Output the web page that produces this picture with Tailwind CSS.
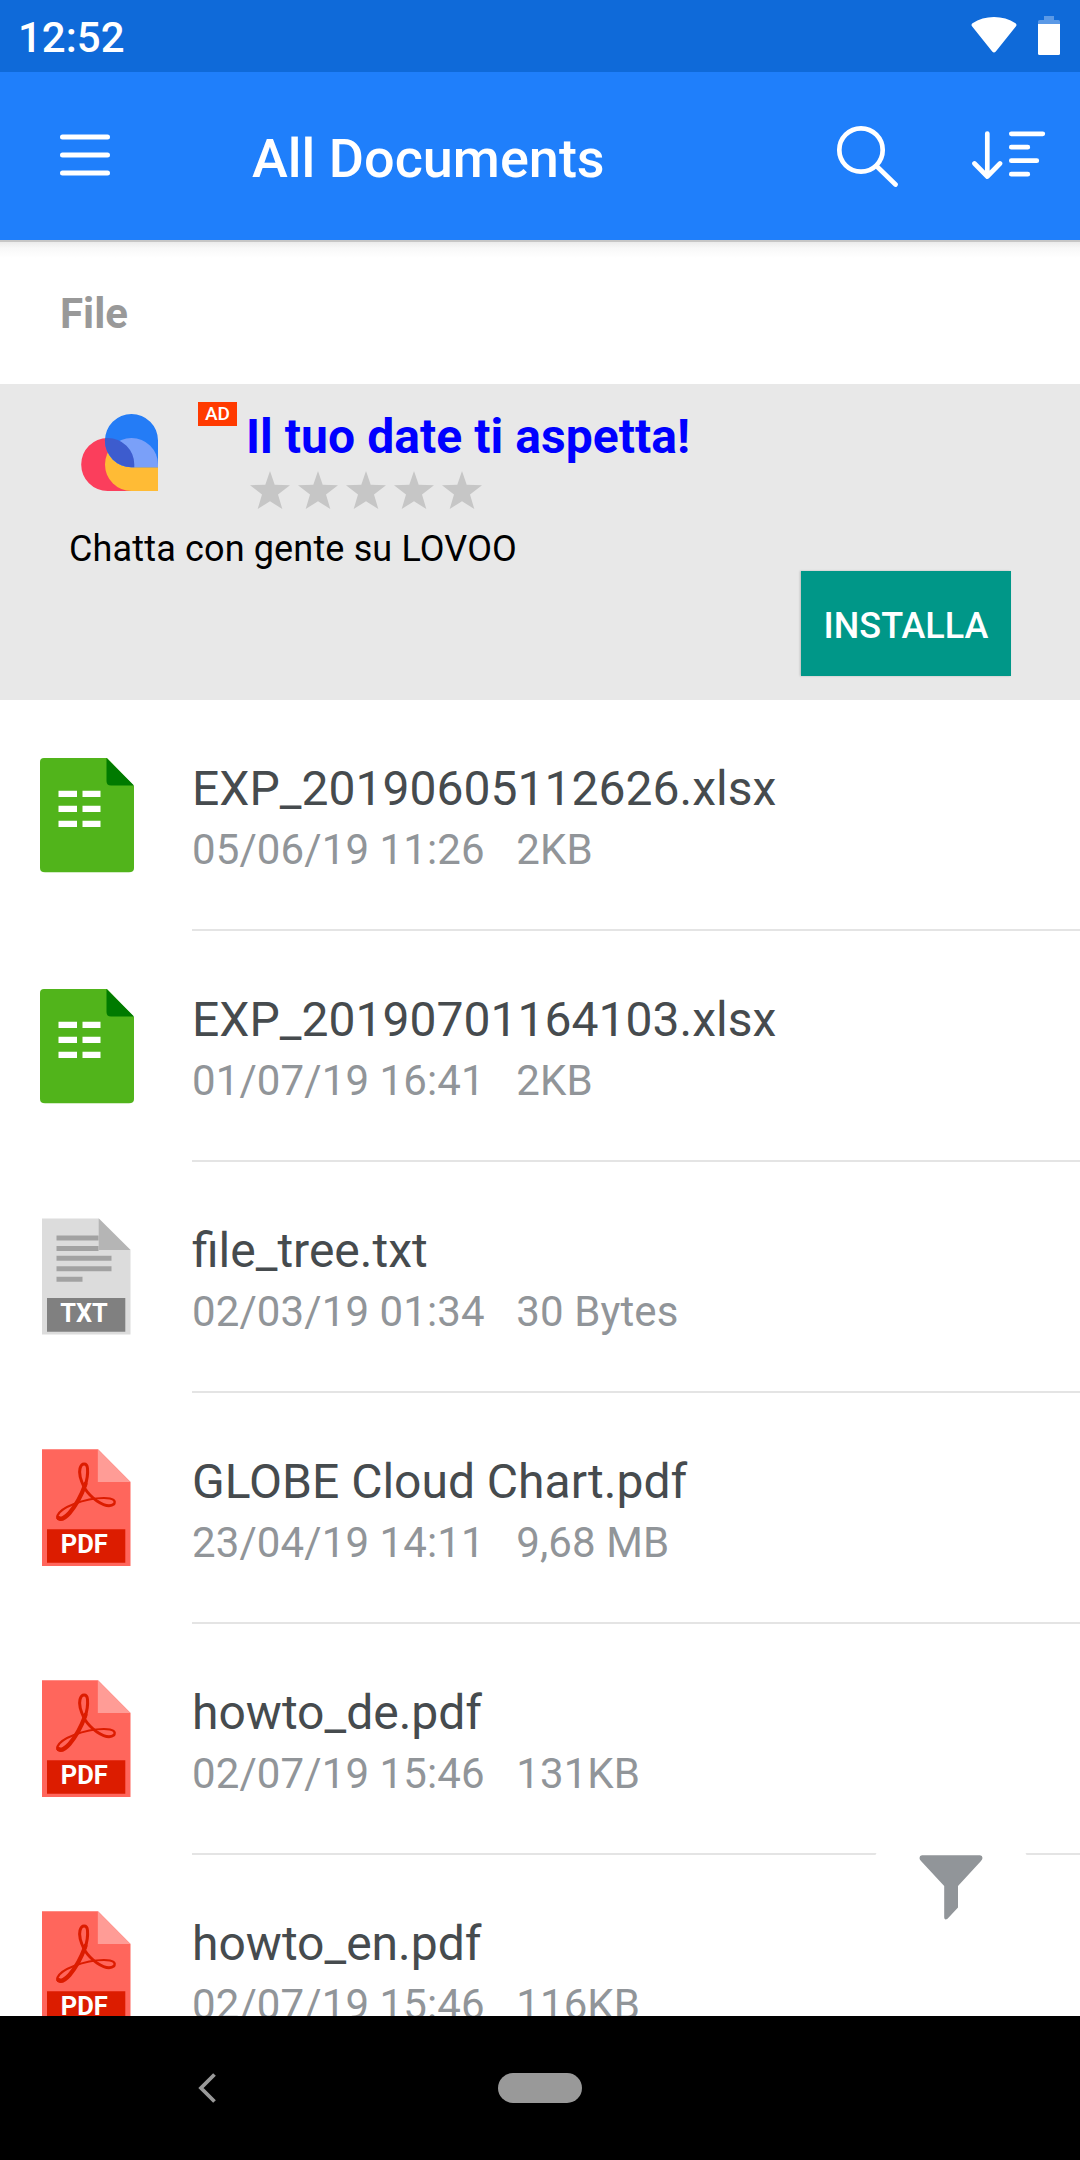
<!DOCTYPE html>
<html lang="it">
<head>
<meta charset="utf-8">
<title>All Documents</title>
<script src="https://cdn.jsdelivr.net/npm/@tailwindcss/browser@4"></script>
</head>
<body class="bg-white">
<svg class="hidden">
  <symbol id="xls" viewBox="0 0 96 120">
    <path d="M5 1H68L95 29V111Q95 115.300 90 115.300H6Q1 115.300 1 111V5Q1 1 5 1Z" fill="#51b41b"/>
    <path d="M67.500 1L95 28.500H72Q67.500 28.500 67.500 24Z" fill="#007a00"/>
    <path d="M19.500 33.700h18.500v6.300h-18.500zM43.500 33.700h18v6.300h-18zM19.500 48.700h18.500v6.300h-18.500zM43.500 48.700h18v6.300h-18zM19.500 63.800h18.500v6.300h-18.500zM43.500 63.800h18v6.300h-18z" fill="#fff"/>
  </symbol>
  <symbol id="txt" viewBox="0 0 96 120">
    <path d="M3 1.500H60L91.500 33V117.500H3Z" fill="#dcdcdc"/>
    <path d="M59.700 1.500L91.500 33H59.700Z" fill="#b5b5b5"/>
    <path d="M17.500 18.500h42v5h-42zM17.500 29h42v5h-42zM17.500 38.800h55v5h-55zM17.500 49.200h55v5h-55zM17.500 59.800h26v5h-26z" fill="#a2a2a2"/>
    <path d="M8 81h78.300v33.700h-78.300z" fill="#808080"/>
    <text x="45" y="104.700" text-anchor="middle" textLength="47.500" lengthAdjust="spacingAndGlyphs" font-size="26" font-weight="700" fill="#fff">TXT</text>
  </symbol>
  <symbol id="pdf" viewBox="0 0 96 120">
    <path d="M3 1.300H59L91.500 34V118H3Z" fill="#ff665c"/>
    <path d="M58.800 1.300L91.500 34H58.800Z" fill="#ff9c96"/>
    <g fill="none" stroke="#dc1c00" stroke-linecap="round" stroke-linejoin="round">
      <path d="M45.500 40C41.500 32 39.500 26 41 20.500C42.500 14.500 48 14.500 48.500 20.500C49 26 48 32 46 38" stroke-width="3"/>
      <path d="M26 68.500C21.500 72.500 17 71.500 18.500 67.500C20.500 63 27 59 35 56C44 52.500 55 50 65 50C75 50 77 53 75 56" stroke-width="2.200"/>
      <path d="M45.500 40C49 45.500 53 49.500 58 53C64 57 71 59.500 75 56" stroke-width="2.900"/>
      <path d="M46.500 36C42.500 47 37 57.500 30.500 65C26.500 69.500 22 72 19.500 70" stroke-width="4.200"/>
    </g>
    <path d="M8 81.300h78.300v33.500h-78.300z" fill="#dc1c00"/>
    <text x="45.300" y="105" text-anchor="middle" textLength="47" lengthAdjust="spacingAndGlyphs" font-size="26" font-weight="700" fill="#fff">PDF</text>
  </symbol>
  <symbol id="star" viewBox="0 0 40 38">
    <path d="M20 0L24.700 13.800L40 14.200L28 23.500L32.300 38L20 30.300L7.700 38L12 23.500L0 14.200L15.300 13.800Z" fill="#c6c6c6"/>
  </symbol>
</svg>

<div class="relative flex h-[2160px] w-[1080px] flex-col overflow-hidden bg-white font-['Roboto',sans-serif]">
  <!-- status bar -->
  <div class="flex h-[72px] shrink-0 items-center justify-between bg-[#0f6ad9] pr-5 pl-[18px] text-white">
    <span class="pt-[2px] text-[42px] leading-[49px] font-medium">12:52</span>
    <div class="flex items-center gap-[21px]">
      <svg class="mb-[2px] h-[36px] w-[46px]" viewBox="0 0 46 36"><path d="M1.200 9.600Q-.3 7.800 1.500 6.300Q11 0 23 0Q35 0 44.500 6.300Q46.300 7.800 44.800 9.600L24.800 34.500Q23 36.700 21.200 34.500Z" fill="#fff"/></svg>
      <svg class="mb-[1px] h-[39px] w-[22px]" viewBox="0 0 22 39"><path d="M6 0h10v4h4.500q1.500 0 1.500 1.500v3h-22v-3q0-1.500 1.500-1.500h4.500z" fill="#5b99e6"/><path d="M0 8h22v29.500q0 1.500-1.500 1.500h-19q-1.500 0-1.500-1.500z" fill="#fff"/></svg>
    </div>
  </div>
  <!-- app bar -->
  <header class="flex h-[168px] shrink-0 items-center bg-[#1f7ffb] pr-[34px] pl-[60px] text-white">
    <svg class="mb-[2px] h-[42px] w-[50px]" viewBox="0 0 50 42" stroke="#fff" stroke-width="5" stroke-linecap="round"><path d="M2.500 3h45M2.500 21h45M2.500 39h45"/></svg>
    <h1 class="ml-[142px] grow pt-[5px] text-[54px] leading-[64px] font-medium whitespace-nowrap">All Documents</h1>
    <svg class="h-[64px] w-[64px]" viewBox="0 0 64 64" fill="none" stroke="#fff" stroke-width="4.700" stroke-linecap="round"><circle cx="27" cy="26" r="21.700"/><path d="M43.500 43L61.500 60.500"/></svg>
    <svg class="mb-[2px] ml-[72px] h-[50px] w-[76px]" viewBox="0 0 76 50" fill="none" stroke="#fff" stroke-width="4.700" stroke-linecap="round" stroke-linejoin="round"><path d="M17.300 3.500V46M4.500 33.500L17.300 46.500L30 33.500M41.300 3.800h31.500M41.300 17.200h16.500M41.300 30.700h25.500M41.300 44.200h16.500"/></svg>
  </header>
  <div class="h-[2px] shrink-0 bg-[#c6c6c6]"></div>
  <div class="h-[142px] shrink-0 bg-[linear-gradient(#ebebeb,#f8f8f8_6px,#fff_16px)] pt-[47px] pl-[60px] text-[42px] leading-[49px] font-bold text-[#999]">File</div>
  <!-- sponsored item -->
  <section class="flex h-[316px] shrink-0 flex-col bg-[#e8e8e8]">
    <div class="flex h-[136px] items-start pl-[81px]">
      <svg class="mt-[30px] h-[77px] w-[77px]" viewBox="0 0 77 77">
        <defs><clipPath id="top"><path d="M50.500 0A26.500 26.500 0 0 1 77 26.500V53.200H50.500A26.500 26.500 0 0 1 50.500 0Z"/></clipPath></defs>
        <path d="M26.700 24A26.500 26.500 0 0 1 53.300 50.500V77H26.700A26.500 26.500 0 0 1 26.700 24Z" fill="#fb3e5c"/>
        <path d="M50.500 24A26.500 26.500 0 0 1 77 50.500V77H50.500A26.500 26.500 0 0 1 50.500 24Z" fill="#ffbb35"/>
        <g clip-path="url(#top)">
          <path d="M0 0h77v77h-77z" fill="#247cf6"/>
          <path d="M50.500 24A26.500 26.500 0 0 1 77 50.500V77H50.500A26.500 26.500 0 0 1 50.500 24Z" fill="#7aa0f9"/>
          <path d="M26.700 24A26.500 26.500 0 0 1 53.300 50.500V77H26.700A26.500 26.500 0 0 1 26.700 24Z" fill="#3d5cce"/>
        </g>
      </svg>
      <span class="mt-[18px] ml-[40px] flex h-[24px] w-[39px] items-center justify-center bg-[#ff3a00] text-[19px] leading-[24px] font-medium text-white">AD</span>
      <div class="ml-[9px] pt-[25px]">
        <div class="text-[48px] leading-[56px] font-bold tracking-[0.05px] whitespace-nowrap text-[#0000ff]">Il tuo date ti aspetta!</div>
        <div class="mt-[6px] ml-[4px] flex gap-[8px]">
          <svg class="h-[38px] w-[40px]"><use href="#star"/></svg>
          <svg class="h-[38px] w-[40px]"><use href="#star"/></svg>
          <svg class="h-[38px] w-[40px]"><use href="#star"/></svg>
          <svg class="h-[38px] w-[40px]"><use href="#star"/></svg>
          <svg class="h-[38px] w-[40px]"><use href="#star"/></svg>
        </div>
      </div>
    </div>
    <p class="mt-[8px] ml-[69px] text-[36px] leading-[42px] tracking-[0.15px] text-black">Chatta con gente su LOVOO</p>
    <div class="mt-[1px] mr-[69px] flex h-[105px] w-[210px] items-center justify-center self-end bg-[#009788] pt-[5px] text-[36px] leading-[42px] font-medium text-white shadow-[-1px_0_2px_rgba(0,0,0,0.2)]">INSTALLA</div>
  </section>
  <!-- file list -->
  <main class="h-[1316px] shrink-0 overflow-hidden">
    <article class="flex h-[231px]">
      <svg class="mt-[57px] ml-[39px] h-[120px] w-[96px]"><use href="#xls"/></svg>
      <div class="ml-[57px] grow border-b-2 border-[#e4e4e4] pt-[61px]">
        <div class="text-[48px] leading-[56px] tracking-[0.03px] text-[#464b4e]">EXP_20190605112626.xlsx</div>
        <div class="mt-[8px] text-[42px] leading-[49px] tracking-[0.1px] whitespace-pre text-[#919599]">05/06/19 11:26   2KB</div>
      </div>
    </article>
    <article class="flex h-[231px]">
      <svg class="mt-[57px] ml-[39px] h-[120px] w-[96px]"><use href="#xls"/></svg>
      <div class="ml-[57px] grow border-b-2 border-[#e4e4e4] pt-[61px]">
        <div class="text-[48px] leading-[56px] tracking-[0.03px] text-[#464b4e]">EXP_20190701164103.xlsx</div>
        <div class="mt-[8px] text-[42px] leading-[49px] tracking-[0.1px] whitespace-pre text-[#919599]">01/07/19 16:41   2KB</div>
      </div>
    </article>
    <article class="flex h-[231px]">
      <svg class="mt-[55px] ml-[39px] h-[120px] w-[96px]"><use href="#txt"/></svg>
      <div class="ml-[57px] grow border-b-2 border-[#e4e4e4] pt-[61px]">
        <div class="text-[48px] leading-[56px] text-[#464b4e]">file_tree.txt</div>
        <div class="mt-[8px] text-[42px] leading-[49px] tracking-[0.1px] whitespace-pre text-[#919599]">02/03/19 01:34   30 Bytes</div>
      </div>
    </article>
    <article class="flex h-[231px]">
      <svg class="mt-[55px] ml-[39px] h-[120px] w-[96px]"><use href="#pdf"/></svg>
      <div class="ml-[57px] grow border-b-2 border-[#e4e4e4] pt-[61px]">
        <div class="text-[48px] leading-[56px] text-[#464b4e]">GLOBE Cloud Chart.pdf</div>
        <div class="mt-[8px] text-[42px] leading-[49px] tracking-[0.1px] whitespace-pre text-[#919599]">23/04/19 14:11   9,68 MB</div>
      </div>
    </article>
    <article class="flex h-[231px]">
      <svg class="mt-[55px] ml-[39px] h-[120px] w-[96px]"><use href="#pdf"/></svg>
      <div class="ml-[57px] grow border-b-2 border-[#e4e4e4] pt-[61px]">
        <div class="text-[48px] leading-[56px] text-[#464b4e]">howto_de.pdf</div>
        <div class="mt-[8px] text-[42px] leading-[49px] tracking-[0.1px] whitespace-pre text-[#919599]">02/07/19 15:46   131KB</div>
      </div>
    </article>
    <article class="flex h-[231px]">
      <svg class="mt-[55px] ml-[39px] h-[120px] w-[96px]"><use href="#pdf"/></svg>
      <div class="ml-[57px] grow border-b-2 border-[#e4e4e4] pt-[61px]">
        <div class="text-[48px] leading-[56px] text-[#464b4e]">howto_en.pdf</div>
        <div class="mt-[8px] text-[42px] leading-[49px] tracking-[0.1px] whitespace-pre text-[#919599]">02/07/19 15:46   116KB</div>
      </div>
    </article>
  </main>
  <!-- floating filter button -->
  <div class="absolute top-[1805px] left-[869px] flex h-[164px] w-[164px] items-center justify-center rounded-full bg-white">
    <svg class="h-[65px] w-[64px]" viewBox="0 0 64 65"><path d="M3 .3H61Q63.500.5 63.500 3Q63.300 4.500 62 6L39 31V52.500L28.500 63.700Q25.500 65.500 25.200 62.500V31L2 6Q.5 4.500 .5 3Q.5.5 3 .3Z" fill="#919599"/></svg>
  </div>
  <!-- navigation bar -->
  <nav class="flex h-[144px] shrink-0 items-center bg-black pl-[198px]">
    <svg class="h-[30px] w-[18px]" viewBox="0 0 18 30" fill="none" stroke="#999" stroke-width="3.800"><path d="M16.500 1.500L3 15L16.500 28.500"/></svg>
    <div class="ml-[282px] h-[30px] w-[84px] rounded-full bg-[#999]"></div>
  </nav>
</div>
</body>
</html>
